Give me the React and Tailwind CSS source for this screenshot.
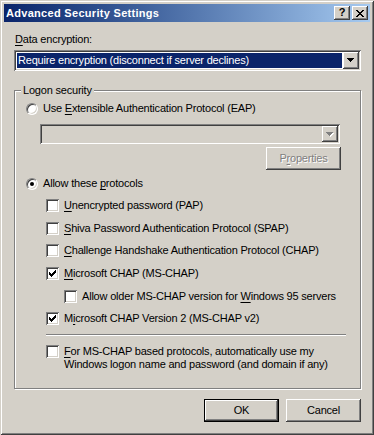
import React from "react";

// classic 3D bevels
const raised = "shadow-[inset_-1px_-1px_#404040,inset_1px_1px_#ffffff,inset_-2px_-2px_#808080,inset_2px_2px_#d4d0c8]";
const sunken = "shadow-[inset_1px_1px_#808080,inset_-1px_-1px_#ffffff,inset_2px_2px_#404040,inset_-2px_-2px_#d4d0c8]";

const Arrow = ({ disabled }) => (
  <svg width="8" height="5" viewBox="0 0 8 5" shapeRendering="crispEdges">
    {disabled && <path d="M1 1h7v1H1z M2 2h5v1H2z M3 3h3v1H3z M4 4h1v1H4z" fill="#ffffff" />}
    <path d="M0 0h7v1H0z M1 1h5v1H1z M2 2h3v1H2z M3 3h1v1H3z" fill={disabled ? "#808080" : "#000000"} />
  </svg>
);

const Radio = ({ checked }) => (
  <div className="w-[12px] h-[12px] shrink-0 rounded-full bg-white border border-t-[#808080] border-l-[#808080] border-b-white border-r-white shadow-[inset_1px_1px_#404040,inset_-1px_-1px_#d4d0c8] flex items-center justify-center">
    {checked && <div className="w-[4px] h-[4px] rounded-full bg-black" />}
  </div>
);

const Check = ({ checked }) => (
  <div className={`w-[13px] h-[13px] shrink-0 bg-white flex items-center justify-center ${sunken}`}>
    {checked && (
      <svg width="7" height="7" viewBox="0 0 7 7" shapeRendering="crispEdges">
        <path d="M6 0h1v3H6z M5 1h1v3H5z M4 2h1v3H4z M3 3h1v3H3z M2 4h1v3H2z M1 3h1v3H1z M0 2h1v3H0z" fill="#000" />
      </svg>
    )}
  </div>
);

const U = ({ children }) => <span className="underline underline-offset-[2px]">{children}</span>;

const CheckRow = ({ checked, className = "", children }) => (
  <div className={`flex items-start gap-[5px] ${className}`}>
    <Check checked={checked} />
    <div className="leading-[13px]">{children}</div>
  </div>
);

export default function App() {
  return (
    <div className="w-[374px] h-[435px] bg-[#d4d0c8] p-[4px] text-[11px] text-black font-['Tahoma','Liberation_Sans',sans-serif] shadow-[inset_1px_1px_#d4d0c8,inset_-1px_-1px_#404040,inset_2px_2px_#ffffff,inset_-2px_-2px_#808080] select-none">
      {/* title bar */}
      <div className="h-[18px] flex items-center justify-between pl-[2px] pr-[2px] bg-linear-to-r from-[#0a246a] to-[#a6caf0]">
        <span className="text-white font-bold text-[11px] tracking-[0.3px] leading-[18px]">Advanced Security Settings</span>
        <div className="flex gap-[2px]">
          <div className={`w-[16px] h-[14px] bg-[#d4d0c8] flex items-center justify-center font-bold text-[11px] leading-none pb-[1px] ${raised}`}>?</div>
          <div className={`w-[16px] h-[14px] bg-[#d4d0c8] flex items-center justify-center ${raised}`}>
            <svg width="8" height="7" viewBox="0 0 8 7" shapeRendering="crispEdges">
              <path d="M0 0h2v1H0z M6 0h2v1H6z M1 1h2v1H1z M5 1h2v1H5z M2 2h4v1H2z M3 3h2v1H3z M2 4h4v1H2z M1 5h2v1H1z M5 5h2v1H5z M0 6h2v1H0z M6 6h2v1H6z" fill="#000" />
            </svg>
          </div>
        </div>
      </div>

      <div className="px-[10px] tracking-[-0.2px]">
        <div className="mt-[11px] leading-[13px] pl-[1px]"><U>D</U>ata encryption:</div>

        {/* encryption combo */}
        <div className={`mt-[4px] h-[21px] w-[347px] bg-white flex p-[2px] ${sunken}`}>
          <div className="flex-1 m-[1px] bg-[#0a246a] text-white leading-[15px] pl-[1px]">
            Require encryption (disconnect if server declines)
          </div>
          <div className={`w-[16px] h-[17px] bg-[#d4d0c8] flex items-center justify-center ${raised}`}>
            <Arrow />
          </div>
        </div>

        {/* group box */}
        <div className="relative mt-[19px] h-[299px] w-[347px] border border-[#808080] shadow-[inset_1px_1px_#ffffff,1px_1px_#ffffff] pl-[11px]">
          <div className="absolute -top-[7px] left-[6px] px-[2px] bg-[#d4d0c8] leading-[13px]">Logon security</div>

          <div className="mt-[11px] flex items-center gap-[5px] h-[13px]">
            <Radio />
            <span>Use <U>E</U>xtensible Authentication Protocol (EAP)</span>
          </div>

          <div className="ml-[14px] w-[301px] flex flex-col">
            <div className={`mt-[9px] h-[20px] w-[300px] bg-[#d4d0c8] flex justify-end p-[2px] ${sunken}`}>
              <div className={`w-[16px] h-[16px] bg-[#d4d0c8] flex items-center justify-center ${raised}`}>
                <Arrow disabled />
              </div>
            </div>
            <div className={`self-end mt-[3px] w-[75px] h-[23px] bg-[#d4d0c8] flex items-center justify-center text-[#808080] [text-shadow:1px_1px_#ffffff] ${raised}`}>
              P<U>r</U>operties
            </div>
          </div>

          <div className="mt-[7px] flex items-center gap-[5px] h-[13px]">
            <Radio checked />
            <span>Allow these <U>p</U>rotocols</span>
          </div>

          <div className="ml-[20px] flex flex-col">
            <CheckRow className="mt-[9px]"><U>U</U>nencrypted password (PAP)</CheckRow>
            <CheckRow className="mt-[10px]"><U>S</U>hiva Password Authentication Protocol (SPAP)</CheckRow>
            <CheckRow className="mt-[9px]"><U>C</U>hallenge Handshake Authentication Protocol (CHAP)</CheckRow>
            <CheckRow checked className="mt-[10px]"><U>M</U>icrosoft CHAP (MS-CHAP)</CheckRow>
            <CheckRow className="mt-[10px] ml-[18px]">Allow older MS-CHAP version for <U>W</U>indows 95 servers</CheckRow>
            <CheckRow checked className="mt-[9px]">M<U>i</U>crosoft CHAP Version 2 (MS-CHAP v2)</CheckRow>
            <div className="mt-[9px] w-[300px] h-[2px] border-t border-t-[#808080] border-b border-b-white" />
            <CheckRow className="mt-[9px]">
              <U>F</U>or MS-CHAP based protocols, automatically use my
              <br />
              Windows logon name and password (and domain if any)
            </CheckRow>
          </div>
        </div>

        {/* buttons */}
        <div className="mt-[10px] flex justify-end gap-[7px] w-[347px]">
          <div className="w-[75px] h-[23px] bg-[#d4d0c8] flex items-center justify-center shadow-[inset_0_0_0_1px_#000000,inset_-2px_-2px_#404040,inset_2px_2px_#ffffff,inset_-3px_-3px_#808080]">OK</div>
          <div className={`w-[75px] h-[23px] bg-[#d4d0c8] flex items-center justify-center ${raised}`}>Cancel</div>
        </div>
      </div>
    </div>
  );
}
